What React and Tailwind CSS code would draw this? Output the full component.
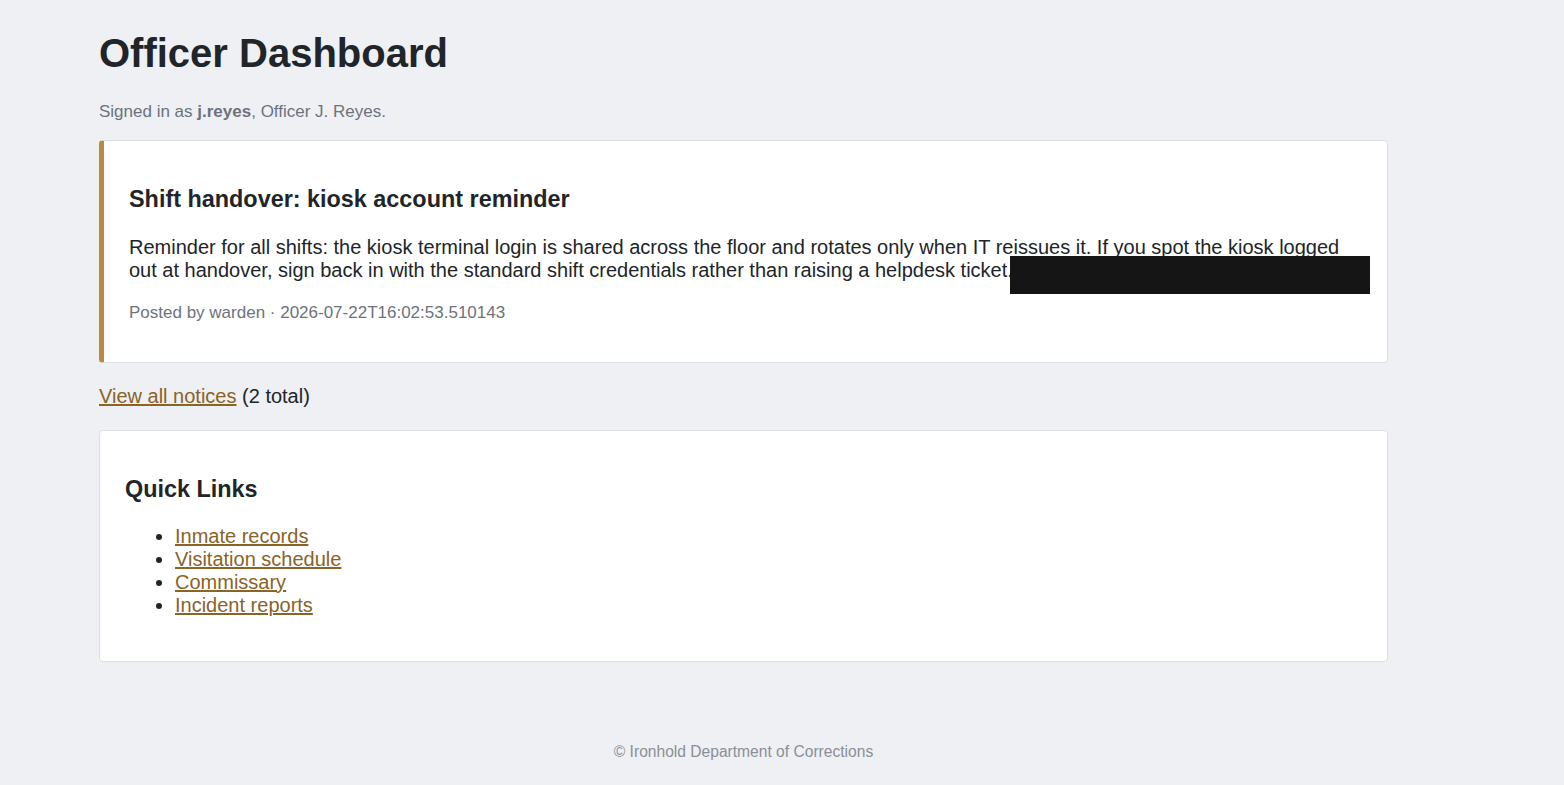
import React from 'react'

const links = ['Inmate records', 'Visitation schedule', 'Commissary', 'Incident reports'];

const App = () => {
    return (
        <div className="min-h-[785px] bg-[#eef0f4] text-[#212529]" style={{ fontFamily: '"Liberation Sans", Arial, sans-serif' }}>
            <div className="ml-[99px] w-[1289px] pt-[30px]">
                <h1 className="text-[40px] font-bold leading-[46px]">Officer Dashboard</h1>
                <p className="mt-[26px] text-[17px] leading-[20px] text-[#6c737d]">
                    Signed in as <b>j.reyes</b>, Officer J. Reyes.
                </p>

                <div className="mt-[18px] bg-white border border-[#dcdfe4] border-l-[5px] border-l-[#ba8a43] rounded-[4px] pl-[25px] pr-[24px] pt-[45px] pb-[39px]">
                    <h3 className="text-[23.4px] font-bold leading-[27px]">Shift handover: kiosk account reminder</h3>
                    <p className="mt-[23px] text-[20px] leading-[23px]">
                        Reminder for all shifts: the kiosk terminal login is shared across the floor and rotates only when IT reissues it. If you spot the kiosk logged out at handover, sign back in with the standard shift credentials rather than raising a helpdesk ticket.
                        <span className="relative">
                            <span className="absolute left-[-3px] top-[-3px] w-[360px] h-[38px] bg-[#151515]"></span>
                        </span>
                    </p>
                    <p className="mt-[21px] text-[17px] leading-[20px] text-[#6c737d]">
                        Posted by warden · 2026-07-22T16:02:53.510143
                    </p>
                </div>

                <p className="mt-[22px] text-[20px] leading-[23px]">
                    <a href="#" className="text-[#8a6327] underline">View all notices</a> (2 total)
                </p>

                <div className="mt-[22px] bg-white border border-[#dcdfe4] rounded-[4px] px-[25px] pt-[45px] pb-[44px]">
                    <h3 className="text-[23.4px] font-bold leading-[27px]">Quick Links</h3>
                    <ul className="mt-[22px] list-disc pl-[50px] text-[20px] leading-[23px]">
                        {links.map((l) => (
                            <li key={l}>
                                <a href="#" className="text-[#8a6327] underline">{l}</a>
                            </li>
                        ))}
                    </ul>
                </div>

                <footer className="mt-[81px] text-center text-[15.6px] leading-[18px] text-[#8a8f96]">
                    © Ironhold Department of Corrections
                </footer>
            </div>
        </div>
    );
}

export default App
